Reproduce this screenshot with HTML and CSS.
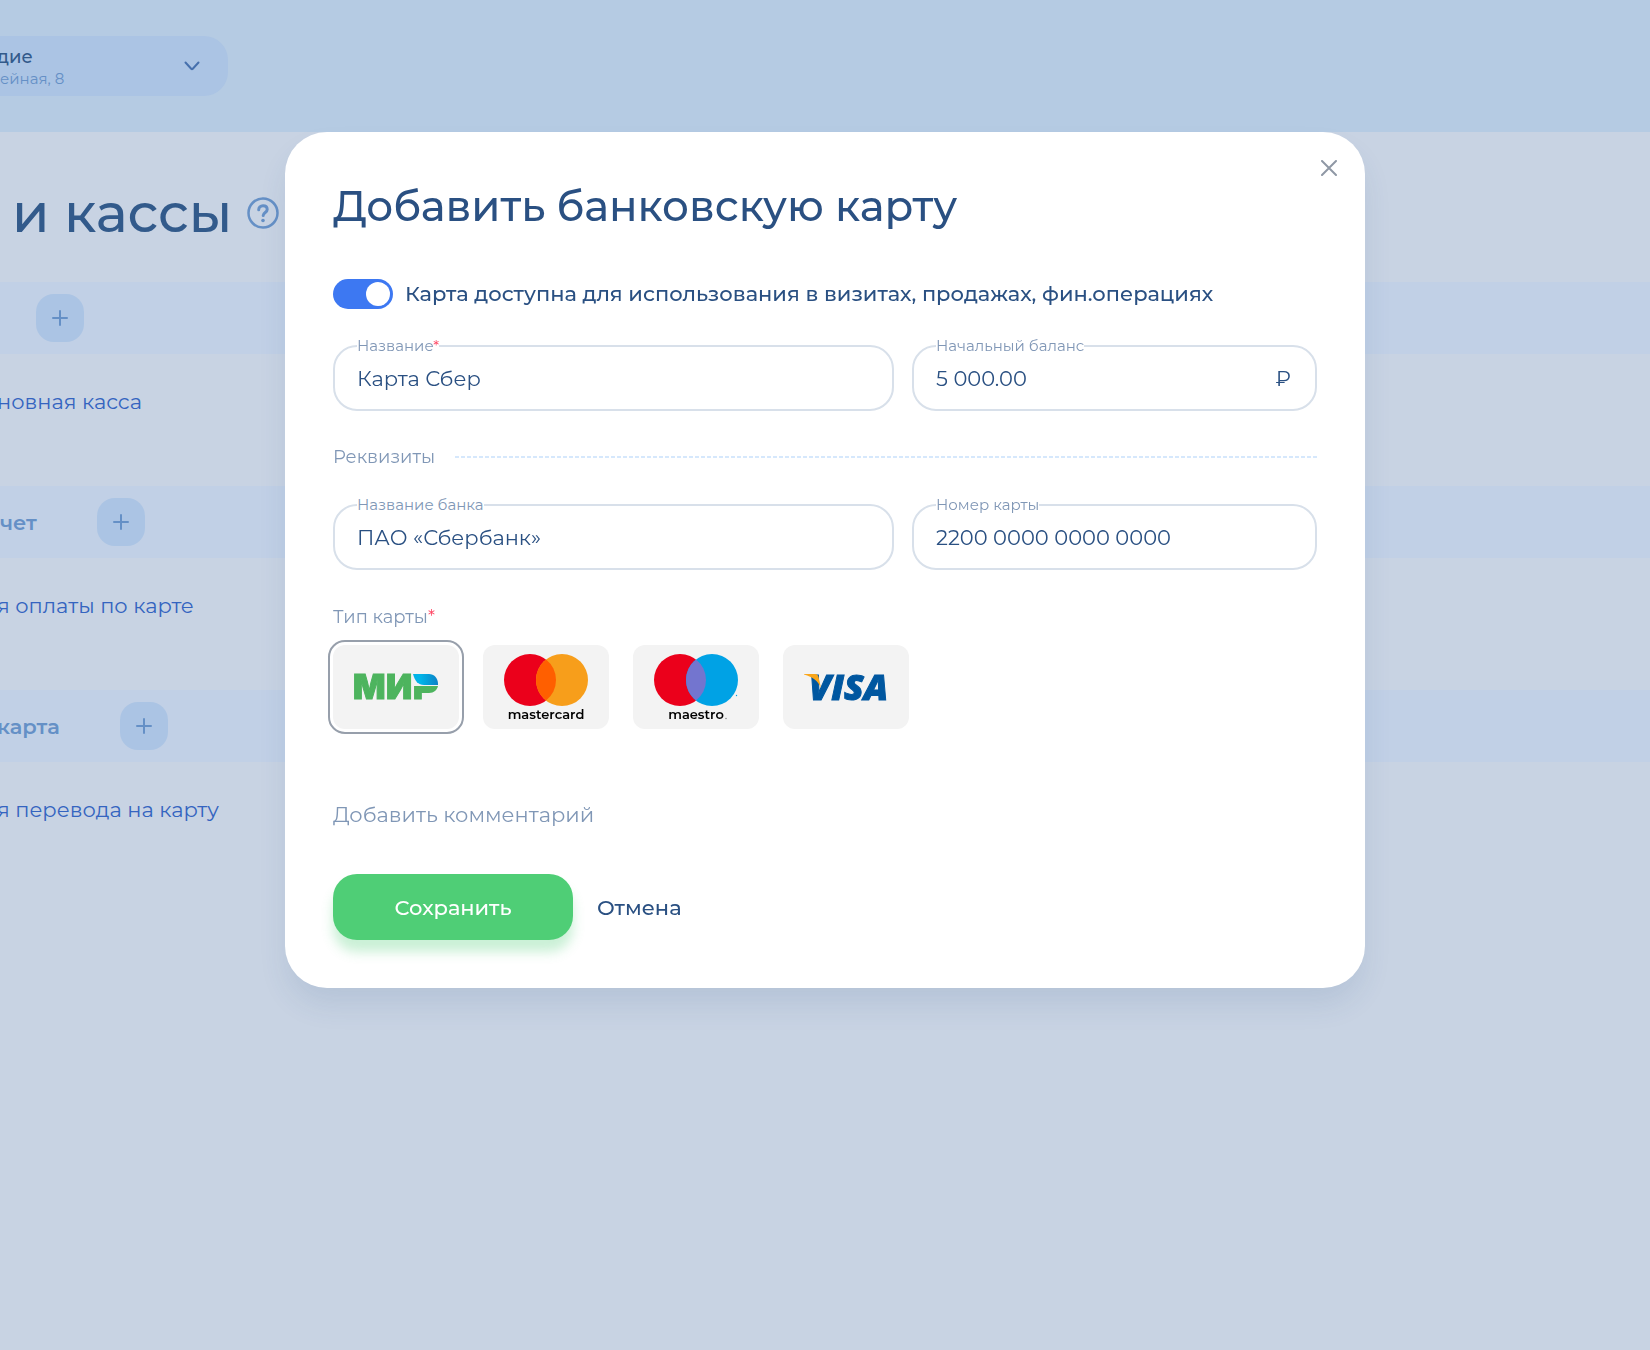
FILE: index.html
```html
<!DOCTYPE html>
<html lang="ru">
<head>
  <meta charset="UTF-8">
  <meta name="viewport" content="width=device-width, initial-scale=1.0">
  <title>Счета и кассы</title>
  <link rel="stylesheet" href="styles.css">
</head>
<body>
  <header class="topbar">
    <button type="button" class="branch">
      <span class="branch-text">
        <span class="branch-name">дие</span>
        <span class="branch-address">ейная, 8</span>
      </span>
      <svg class="branch-arrow" width="16" height="10" viewBox="0 0 16 10">
        <path d="M1.5 1.5l5.7 6.2q.8.8 1.6 0l5.7-6.2" fill="none" stroke="currentColor" stroke-width="2" stroke-linecap="round"/>
      </svg>
    </button>
  </header>

  <main class="page">
    <div class="page-head">
      <h1>и кассы</h1>
      <button type="button" class="help" aria-label="Помощь">
        <svg width="32" height="32" viewBox="0 0 32 32" fill="none" stroke="currentColor">
          <circle cx="16" cy="16" r="14.5" stroke-width="2.5"/>
          <path d="M11.7 12.8c0-2.5 1.8-4.1 4.3-4.1s4.2 1.5 4.2 3.7c0 3.2-4 2.9-4 6.2" stroke-width="3" stroke-linecap="round"/>
          <circle cx="16" cy="23.5" r="1.8" fill="currentColor" stroke="none"/>
        </svg>
      </button>
    </div>

    <section>
      <div class="group">
        <button type="button" class="add add-first" aria-label="Добавить кассу">
          <svg width="16" height="16" viewBox="0 0 16 16"><path d="M8 1v14M1 8h14"/></svg>
        </button>
      </div>
      <div class="row"><a href="#">новная касса</a></div>
    </section>
    <section>
      <div class="group">
        <h2>чет</h2>
        <button type="button" class="add" aria-label="Добавить счет">
          <svg width="16" height="16" viewBox="0 0 16 16"><path d="M8 1v14M1 8h14"/></svg>
        </button>
      </div>
      <div class="row"><a href="#">я оплаты по карте</a></div>
    </section>
    <section>
      <div class="group">
        <h2 class="cut">карта</h2>
        <button type="button" class="add" aria-label="Добавить карту">
          <svg width="16" height="16" viewBox="0 0 16 16"><path d="M8 1v14M1 8h14"/></svg>
        </button>
      </div>
      <div class="row"><a href="#">я перевода на карту</a></div>
    </section>
  </main>

  <div class="overlay">
    <form class="modal" role="dialog" aria-labelledby="modalTitle">
      <button type="button" class="close" aria-label="Закрыть">
        <svg width="16" height="16" viewBox="0 0 16 16"><path d="M1 1l14 14M15 1L1 15"/></svg>
      </button>
      <h2 class="modal-title" id="modalTitle">Добавить банковскую карту</h2>

      <label class="switch">
        <input type="checkbox" checked>
        <span>Карта доступна для использования в визитах, продажах, фин.операциях</span>
      </label>

      <div class="fields">
        <div class="field field-wide">
          <label for="name">Название<span class="req">*</span></label>
          <input type="text" id="name" value="Карта Сбер">
        </div>
        <div class="field">
          <label for="balance">Начальный баланс</label>
          <input type="text" id="balance" value="5 000.00">
          <span class="currency">₽</span>
        </div>
      </div>

      <div class="divider">Реквизиты</div>

      <div class="fields">
        <div class="field field-wide">
          <label for="bank">Название банка</label>
          <input type="text" id="bank" value="ПАО «Сбербанк»">
        </div>
        <div class="field">
          <label for="number">Номер карты</label>
          <input type="text" id="number" value="2200 0000 0000 0000">
        </div>
      </div>

      <fieldset class="types">
        <legend>Тип карты<span class="req">*</span></legend>
        <div class="type-list">
          <label class="type">
            <input type="radio" name="type" value="mir" aria-label="МИР" checked>
            <svg viewBox="0 0 126 84">
              <defs>
                <linearGradient id="mirBlue"><stop offset="0.3" stop-color="#00b4e8"/><stop offset="1" stop-color="#0c82c6"/></linearGradient>
                <clipPath id="mirStem"><path d="M70 41h40v20H70z"/></clipPath>
              </defs>
              <text class="logo-mir" x="20 53" y="54">МИ</text>
              <text class="logo-mir" x="80" y="54" clip-path="url(#mirStem)">Р</text>
              <path d="M82 41h23c-1 4-4 7-9 7H82z" fill="#4db45e"/>
              <path d="M80 29h16c5 0 9 4 9 10v1H91c-6 0-9-4-11-11z" fill="url(#mirBlue)"/>
            </svg>
          </label>
          <label class="type">
            <input type="radio" name="type" value="mastercard" aria-label="mastercard">
            <svg viewBox="0 0 126 84">
              <circle cx="47" cy="35" r="26" fill="#eb001b"/>
              <circle cx="79" cy="35" r="26" fill="#f79e1b"/>
              <path d="M63 14.5a26 26 0 0 1 0 41a26 26 0 0 1 0-41z" fill="#ff5f00"/>
              <text class="logo-name" x="63" y="74">mastercard</text>
            </svg>
          </label>
          <label class="type">
            <input type="radio" name="type" value="maestro" aria-label="maestro">
            <svg viewBox="0 0 126 84">
              <circle cx="47" cy="35" r="26" fill="#eb001b"/>
              <circle cx="79" cy="35" r="26" fill="#00a2e5"/>
              <path d="M63 14.5a26 26 0 0 1 0 41a26 26 0 0 1 0-41z" fill="#7375cf"/>
              <circle cx="103.5" cy="50.5" r=".7" fill="#00a2e5"/>
              <text class="logo-name" x="63" y="74">maestro</text>
              <circle cx="93" cy="73.5" r=".7" fill="#777"/>
            </svg>
          </label>
          <label class="type">
            <input type="radio" name="type" value="visa" aria-label="VISA">
            <svg viewBox="0 0 126 84">
              <text class="logo-visa" x="26" y="55">VISA</text>
              <path d="M21 29h11c2 0 3 1 3.5 3l2.5 11c-3-7-8-11-17-13.5z" fill="#faa61a"/>
            </svg>
          </label>
        </div>
      </fieldset>

      <button type="button" class="comment">Добавить комментарий</button>

      <div class="actions">
        <button type="submit" class="save">Сохранить</button>
        <button type="button" class="cancel">Отмена</button>
      </div>
    </form>
  </div>
</body>
</html>
```
FILE: styles.css
```css
* {
  box-sizing: border-box;
}
body {
  margin: 0;
  min-height: 100vh;
  background: #c8d3e3;
  color: #2a5082;
  font-family: Montserrat, "Open Sans", sans-serif;
  font-size: 21px;
  line-height: 28px;
}
button, input {
  font: inherit;
  color: inherit;
}
button {
  padding: 0;
  border: none;
  background: none;
  cursor: pointer;
}
svg {
  display: block;
}
h1, h2 {
  margin: 0;
}

/* page behind the modal */
.topbar {
  height: 132px;
  padding-top: 36px;
  background: #b5cbe3;
}
.branch {
  display: flex;
  align-items: center;
  justify-content: space-between;
  width: 228px;
  height: 60px;
  padding: 4px 28px 0 0;
  border-radius: 0 24px 24px 0;
  background: #abc4e4;
  text-align: left;
}
.branch-text {
  display: flex;
  flex-direction: column;
}
.branch-name {
  margin-left: -3px;
  font-size: 18px;
  font-weight: 500;
  line-height: 22px;
  color: #325a8b;
}
.branch-address {
  font-size: 15px;
  line-height: 22px;
  color: #6590c6;
}
.branch-arrow {
  margin-bottom: 4px;
  color: #4670ad;
}
.page-head {
  display: flex;
  align-items: center;
  gap: 15px;
  height: 150px;
  padding: 12px 0 0 12px;
}
.page-head h1 {
  font-size: 54px;
  font-weight: 500;
  line-height: 66px;
  color: #325a8b;
}
.help {
  color: #6590c6;
}
.group {
  display: flex;
  align-items: center;
  gap: 60px;
  height: 72px;
  background: #c1d0e6;
  color: #6590c6;
}
.group h2 {
  padding-top: 2px;
  font-size: 21px;
  font-weight: 600;
}
.group .cut {
  margin-left: -3px;
}
.add {
  display: grid;
  place-items: center;
  width: 48px;
  height: 48px;
  border-radius: 18px;
  background: #abc4e4;
}
.add-first {
  margin-left: 36px;
}
.add svg, .close svg {
  fill: none;
  stroke: currentColor;
  stroke-width: 2;
  stroke-linecap: round;
}
.row {
  height: 132px;
  margin-left: -3px;
  padding-top: 34px;
}
.row a {
  color: #3464c0;
  text-decoration: none;
}

/* modal */
.overlay {
  position: fixed;
  inset: 0;
  display: flex;
  align-items: flex-start;
  justify-content: center;
  padding-top: 132px;
  overflow-y: auto;
}
.modal {
  position: relative;
  width: 100%;
  max-width: 1080px;
  padding: 48px;
  border-radius: 42px;
  background: #fff;
  box-shadow: 0 18px 30px -3px rgba(42, 80, 130, 0.12);
}
.close {
  position: absolute;
  top: 24px;
  right: 24px;
  padding: 4px;
  color: #8f98a5;
}
.modal-title {
  font-size: 42px;
  font-weight: 500;
  line-height: 52px;
}
.switch {
  display: flex;
  align-items: center;
  gap: 12px;
  margin-top: 47px;
  font-weight: 500;
  line-height: 30px;
}
.switch input {
  appearance: none;
  flex: none;
  width: 60px;
  height: 30px;
  margin: 0;
  padding: 3px;
  border-radius: 15px;
  background: #b9c4d3;
}
.switch input::before {
  content: "";
  display: block;
  width: 24px;
  height: 24px;
  border-radius: 50%;
  background: #fff;
}
.switch input:checked {
  background: #3d78f2;
}
.switch input:checked::before {
  margin-left: 30px;
}
.fields {
  display: flex;
  gap: 18px;
  margin-top: 36px;
}
.field {
  position: relative;
  flex: 405;
}
.field-wide {
  flex: 561;
}
.field label {
  position: absolute;
  top: -9px;
  left: 24px;
  background: #fff;
  font-size: 15px;
  line-height: 20px;
  color: #8097b6;
}
.field input {
  width: 100%;
  height: 66px;
  padding: 0 22px;
  border: 2px solid #d8e0ea;
  border-radius: 24px;
  background: #fff;
  outline: none;
}
.currency {
  position: absolute;
  top: 20px;
  right: 26px;
}
.req {
  color: #ff4765;
}
.divider {
  display: flex;
  align-items: center;
  gap: 20px;
  margin-top: 34px;
  font-size: 18px;
  line-height: 24px;
  color: #8097b6;
}
.divider::after {
  content: "";
  flex: 1;
  height: 2px;
  background: repeating-linear-gradient(90deg, #d6e8fc 0 4px, transparent 4px 6px);
}
.divider + .fields {
  margin-top: 35px;
}
.types {
  min-width: 0;
  margin: 35px 0 0;
  padding: 0;
  border: none;
}
.types legend {
  padding: 0;
  font-size: 18px;
  line-height: 24px;
  color: #8097b6;
}
.type-list {
  display: flex;
  flex-wrap: wrap;
  gap: 24px;
  margin-top: 16px;
}
.type {
  width: 126px;
  height: 84px;
  border-radius: 12px;
  background: #f3f3f3;
  cursor: pointer;
}
.type input {
  position: absolute;
  opacity: 0;
}
.type:has(input:checked) {
  outline: 2px solid #979fab;
  outline-offset: 3px;
}
.logo-mir {
  font: 900 34px Inter, sans-serif;
  fill: #4db45e;
  stroke: #4db45e;
}
.logo-name {
  font: 600 13px Montserrat, "Open Sans", sans-serif;
  text-anchor: middle;
}
.logo-visa {
  font: italic 800 36px "Open Sans", sans-serif;
  fill: #0057a0;
  stroke: #0057a0;
}
.comment {
  display: block;
  margin-top: 72px;
  color: #8097b6;
}
.actions {
  display: flex;
  align-items: center;
  gap: 24px;
  margin-top: 45px;
}
.actions button {
  padding-top: 2px;
  font-weight: 500;
}
.save {
  width: 240px;
  height: 66px;
  border-radius: 24px;
  background: #4fce76;
  box-shadow: 0 12px 12px rgba(79, 206, 118, 0.3);
}
.actions .save {
  color: #fff;
}
```
